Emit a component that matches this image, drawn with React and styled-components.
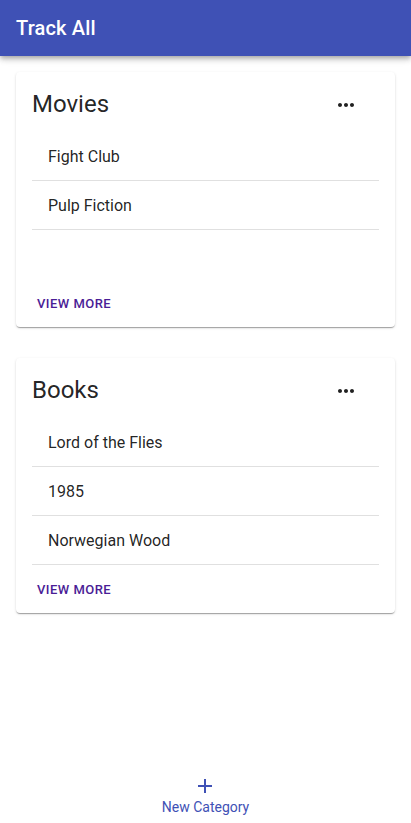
import React from "react";
import styled, { createGlobalStyle } from "styled-components";

const GlobalStyle = createGlobalStyle`
  body {
    margin: 0;
    font-family: Roboto, "Liberation Sans", sans-serif;
    background: #fff;
    color: rgba(0, 0, 0, 0.87);
  }
`;

const Page = styled.div`
  min-height: 100vh;
  display: flex;
  flex-direction: column;
`;

const AppBar = styled.header`
  height: 56px;
  background: #3f51b5;
  display: flex;
  align-items: center;
  padding: 0 16px;
  box-shadow: 0px 2px 4px -1px rgba(0, 0, 0, 0.2),
    0px 4px 5px 0px rgba(0, 0, 0, 0.14), 0px 1px 10px 0px rgba(0, 0, 0, 0.12);
  position: relative;
  z-index: 1;
`;

const AppTitle = styled.h1`
  margin: 0;
  font-size: 20px;
  font-weight: 500;
  color: #fff;
  letter-spacing: 0.15px;
`;

const Main = styled.main`
  display: flex;
  flex-direction: column;
  gap: 31px;
  padding: 16px;
`;

const Card = styled.section`
  background: #fff;
  border-radius: 4px;
  box-shadow: 0px 2px 1px -1px rgba(0, 0, 0, 0.2),
    0px 1px 1px 0px rgba(0, 0, 0, 0.14), 0px 1px 3px 0px rgba(0, 0, 0, 0.12);
`;

const CardHeader = styled.div`
  display: flex;
  align-items: center;
  justify-content: space-between;
  padding: 16px 37px 0 16px;
`;

const CardTitle = styled.h2`
  margin: 0;
  font-size: 24px;
  font-weight: 400;
  line-height: 32px;
  color: rgba(0, 0, 0, 0.87);
`;

const MenuButton = styled.button`
  border: 0;
  background: none;
  padding: 0;
  margin-top: 2px;
  width: 24px;
  height: 24px;
  color: rgba(0, 0, 0, 0.87);
  cursor: pointer;

  svg {
    display: block;
  }
`;

const ItemList = styled.ul`
  list-style: none;
  margin: 12px 16px 0;
  padding: 0;
  height: 147px;
`;

const Item = styled.li`
  height: 48px;
  display: flex;
  align-items: center;
  padding: 0 16px;
  font-size: 16px;
  border-bottom: 1px solid rgba(0, 0, 0, 0.12);
`;

const CardActions = styled.div`
  height: 48px;
  display: flex;
  align-items: center;
  padding: 0 16px;
`;

const TextButton = styled.button`
  border: 0;
  background: none;
  padding: 0 5px;
  font-family: inherit;
  font-size: 13px;
  font-weight: 500;
  letter-spacing: 0.46px;
  text-transform: uppercase;
  color: #4a1d96;
  cursor: pointer;
`;

const BottomNav = styled.nav`
  margin-top: auto;
  height: 56px;
  display: flex;
  justify-content: center;
`;

const NavAction = styled.button`
  border: 0;
  background: none;
  padding: 7px 12px 0;
  display: flex;
  flex-direction: column;
  align-items: center;
  color: #3f51b5;
  font-family: inherit;
  cursor: pointer;

  svg {
    display: block;
  }
`;

const NavLabel = styled.span`
  font-size: 14px;
  line-height: 18px;
`;

const MoreHoriz = () => (
  <svg width="24" height="24" viewBox="0 0 24 24" fill="currentColor">
    <path d="M6 10c-1.1 0-2 .9-2 2s.9 2 2 2 2-.9 2-2-.9-2-2-2zm12 0c-1.1 0-2 .9-2 2s.9 2 2 2 2-.9 2-2-.9-2-2-2zm-6 0c-1.1 0-2 .9-2 2s.9 2 2 2 2-.9 2-2-.9-2-2-2z" />
  </svg>
);

const AddIcon = () => (
  <svg width="24" height="24" viewBox="0 0 24 24" fill="currentColor">
    <path d="M19 13h-6v6h-2v-6H5v-2h6V5h2v6h6v2z" />
  </svg>
);

const categories = [
  { name: "Movies", items: ["Fight Club", "Pulp Fiction"] },
  { name: "Books", items: ["Lord of the Flies", "1985", "Norwegian Wood"] },
];

const CategoryCard = ({ name, items }) => (
  <Card>
    <CardHeader>
      <CardTitle>{name}</CardTitle>
      <MenuButton aria-label="more">
        <MoreHoriz />
      </MenuButton>
    </CardHeader>
    <ItemList>
      {items.map((item) => (
        <Item key={item}>{item}</Item>
      ))}
    </ItemList>
    <CardActions>
      <TextButton>View more</TextButton>
    </CardActions>
  </Card>
);

const App = () => {
  return (
    <Page>
      <GlobalStyle />
      <AppBar>
        <AppTitle>Track All</AppTitle>
      </AppBar>
      <Main>
        {categories.map((c) => (
          <CategoryCard key={c.name} name={c.name} items={c.items} />
        ))}
      </Main>
      <BottomNav>
        <NavAction>
          <AddIcon />
          <NavLabel>New Category</NavLabel>
        </NavAction>
      </BottomNav>
    </Page>
  );
};

export default App;
